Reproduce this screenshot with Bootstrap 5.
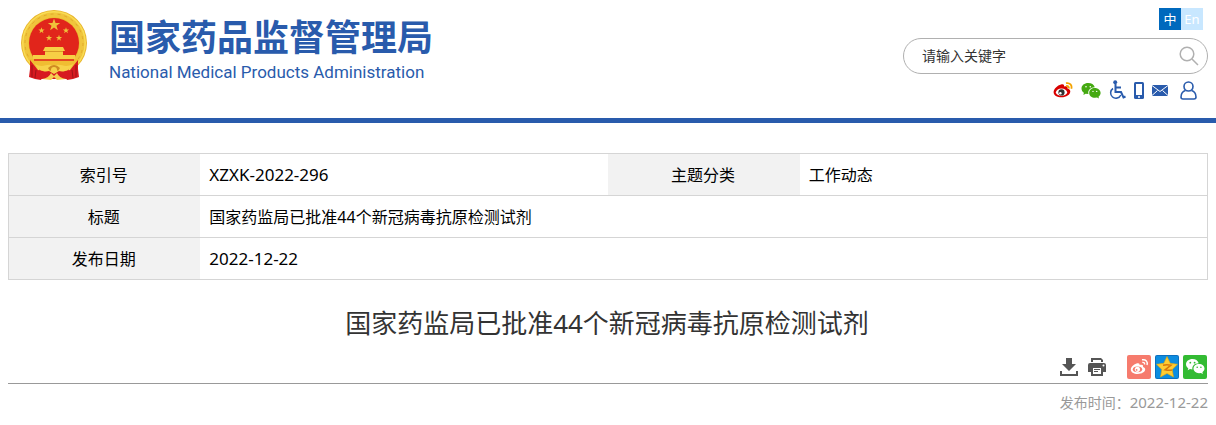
<!DOCTYPE html>
<html lang="zh-CN">
<head>
<meta charset="utf-8">
<meta name="viewport" content="width=device-width, initial-scale=1">
<title>国家药监局已批准44个新冠病毒抗原检测试剂</title>
<link href="https://cdn.jsdelivr.net/npm/bootstrap@5.3.0/dist/css/bootstrap.min.css" rel="stylesheet">
<style>
body{font-family:"Noto Sans","Noto Sans CJK SC",sans-serif;font-size:16px;line-height:24px;color:#000;background:#fff}
a{text-decoration:none}
svg{display:block;flex:none}
.site-head{border-bottom:5px solid #295bac}
.brand{padding:10px 0 0 13px;gap:22px;color:#295bac}
.brand-cn{font-family:"Noto Sans CJK SC",sans-serif;font-weight:700;font-size:36px;line-height:40px;padding-top:5px}
.brand-en{font-family:Roboto,sans-serif;font-size:17px;line-height:24px;padding-top:5px}
.head-side{width:305px;padding:8px 0 18px}
.lang{padding-right:5px}
.lang a{width:22px;height:22px;line-height:22px;font-size:13px;text-align:center;color:#fff}
.lang .on{background:#0069bd}
.lang .off{background:#c8e7ff}
.search{height:36px;margin-top:8px;border:1px solid #b0b0b0;border-radius:18px;padding:0 8px 0 18px}
.search input{border:0;outline:0;background:none;font-size:14px;color:#333;padding:0;min-width:0}
.search input::placeholder{color:#333;opacity:1}
.search button{border:0;background:none;padding:0}
.quick{height:20px;margin-top:6px;padding-right:11px;gap:8px}
.quick a:last-child{margin-left:4px}
.info{border:1px solid #d5d5d5;margin-top:30px;table-layout:fixed;border-collapse:collapse}
.info tr{height:42px;border-bottom:1px solid #d5d5d5}
.info th{width:16%;background:#f2f2f2;font-weight:400;text-align:center;padding:0 2px 0 0}
.info td{padding:0 9px}
.info .code{font-size:17px}
.headline{font-size:26px;line-height:38px;font-weight:400;color:#333;margin:24px 2px 12px 0}
.tools{border-bottom:1px solid #999;height:30px;padding:0 1px 4px 0}
.tools button{border:0;background:none;padding:0}
.issued{font-size:14px;line-height:20px;color:#999;margin:8px 0 0}
.issued time{font-size:15px}
</style>
</head>
<body>
<svg width="0" height="0" class="position-absolute" aria-hidden="true">
<defs>
<path id="star" d="M0-10 2.4-3.2 9.5-3.1 3.8 1.2 5.9 8.1 0 4-5.9 8.1-3.8 1.2-9.5-3.1-2.4-3.2z"/>
</defs>
</svg>
<header class="site-head px-2 d-flex justify-content-between">
<a href="#" class="brand d-flex">
<svg width="66" height="71" viewBox="0 0 66 71" aria-label="国徽">
<ellipse cx="33" cy="33" rx="33" ry="33" fill="#e9b52c"/>
<circle cx="33" cy="33" r="31" fill="none" stroke="#f9dc55" stroke-width="2"/>
<circle cx="33" cy="33" r="28" fill="none" stroke="#f0c53c" stroke-width="5"/>
<circle cx="33" cy="33" r="29" fill="none" stroke="#e2aa2a" stroke-width="1" stroke-dasharray="3 4"/>
<circle cx="33" cy="33" r="25" fill="#e1251b"/>
<g fill="#efc13a"><use href="#star" transform="translate(33 15) scale(.65)"/><use href="#star" transform="translate(20.500 20.500) scale(.33)"/><use href="#star" transform="translate(45 20.500) scale(.33)"/><use href="#star" transform="translate(28 28) scale(.33)"/><use href="#star" transform="translate(38 28) scale(.33)"/></g>
<path d="M24 37h18l2 4h-2v4h12v4H12v-4h12v-4h-2z" fill="#f7cf45"/>
<path d="M24 41.500h18" stroke="#d79a28"/>
<path d="M9 49h48v7H9z" fill="#f0bd32"/>
<path d="M13 50h40" stroke="#e1251b" stroke-width="1.500"/>
<path d="M9 50 17 60 24 62 20 70 14 69 8 67 9 59zM57 50 49 60 42 62 46 70 52 69 58 67 57 59z" fill="#d71920"/>
<path d="M11 55v12M15 60l-1 8M55 55v12M51 60l1 8" stroke="#9d1218"/>
<path d="M18 59h30l-2 10H20z" fill="#d71920"/>
<path d="M14 54c9 5 12-2 19 2 7-4 10 3 19-2-3 8-11 8-14 7l-5 3-5-3c-3 1-11 1-14-7z" fill="#f7d24a"/>
<path d="M27 58q6-6 12 0l-2 3q-4-4-8 0z" fill="#cf8b22"/><circle cx="33" cy="60" r="3" fill="#f7d24a"/>
<path d="M21 69q7-1 9-6l3 3 3-3q2 5 9 6l-9 1-3-3-3 3z" fill="#f5cf52"/>
</svg>
<span class="d-block"><span class="brand-cn d-block">国家药品监督管理局</span><span class="brand-en d-block">National Medical Products Administration</span></span>
</a>
<div class="head-side">
<div class="lang d-flex justify-content-end"><a href="#" class="on">中</a><a href="#" class="off">En</a></div>
<form class="search d-flex align-items-center">
<input type="text" class="flex-grow-1" placeholder="请输入关键字" aria-label="请输入关键字">
<button type="button" aria-label="搜索"><svg width="20" height="20" viewBox="0 0 20 20" fill="none" stroke="#b0b0b0" stroke-width="1.500"><circle cx="8" cy="8" r="6.800"/><path d="m13 13 6 6"/></svg></button>
</form>
<div class="quick d-flex justify-content-end align-items-center">
<a href="#" aria-label="微博"><svg width="20" height="16" viewBox="0 0 20 16"><path d="M8 2.500c2-.8 3.500-.2 3 2 2.500-.7 4 0 3.500 2 2 .6 2.800 1.600 2.800 3 0 3-4 5.800-8.800 5.800C4 15.300.6 13.300.6 10.200.6 7 4.500 3.300 8 2.500z" fill="#d80000"/><ellipse cx="8.500" cy="10.200" rx="5.600" ry="3.600" fill="#fff"/><circle cx="8.500" cy="10.400" r="3.100" fill="#333"/><circle cx="7.400" cy="11.200" r="1.200" fill="#fff"/><path d="M13 1.200c4-.8 6.300 2 5.300 5.600M13.200 4c2-.3 3 .8 2.500 2.600" fill="none" stroke="#f4a300" stroke-width="1.800"/></svg></a>
<a href="#" aria-label="微信"><svg width="20" height="17" viewBox="0 0 20 17" fill="#45a911"><path d="M7.200 1C3.300 1 .5 3.400.5 6.500c0 1.800 1 3.300 2.400 4.300L2.400 13l2.300-1.300 2.700.3c-.8-4 2-6.600 6.400-6.800C13.100 2.500 10.400 1 7.200 1z"/><path d="M13.800 6c-3.300 0-5.600 2.100-5.600 4.900s2.500 4.800 5.700 4.800l2.100-.3 2 1.100-.5-1.800c1.300-.9 2.100-2.200 2.100-3.700C19.600 8.200 17 6 13.800 6z"/><g fill="#fff"><circle cx="5" cy="4.800" r=".8"/><circle cx="9.300" cy="4.800" r=".8"/><circle cx="12" cy="9.400" r=".7"/><circle cx="15.700" cy="9.400" r=".7"/></g></svg></a>
<a href="#" aria-label="无障碍"><svg width="17" height="20" viewBox="0 0 17 20" fill="none" stroke="#295bac" stroke-width="2"><circle cx="6.200" cy="2.200" r="2" fill="#295bac" stroke="none"/><path d="M6.500 4v8h5.500l2.500 5.500 2-1M7 7.500h5"/><path d="M4 8.500a5.300 5.300 0 1 0 7.800 6.500" stroke-width="1.500"/></svg></a>
<a href="#" aria-label="手机"><svg width="10" height="17" viewBox="0 0 10 17"><rect width="10" height="17" rx="1.500" fill="#295bac"/><path d="M2 2h6v11H2z" fill="#fff"/><circle cx="5" cy="15" r="1" fill="#fff"/></svg></a>
<a href="#" aria-label="邮箱"><svg width="16" height="11" viewBox="0 0 16 11"><path d="M0 0h16v11H0z" fill="#295bac"/><path d="m0 .5 8 6 8-6M0 10.500l5.500-5M16 10.500l-5.500-5" fill="none" stroke="#fff"/></svg></a>
<a href="#" aria-label="用户"><svg width="17" height="19" viewBox="0 0 17 19" fill="none" stroke="#295bac" stroke-width="1.600"><circle cx="8.500" cy="5.500" r="4.500"/><path d="M5.500 9.500C2.500 10.500 1 13 1 16q0 2 2 2h11q2 0 2-2c0-3-1.500-5.500-4.500-6.500"/></svg></a>
</div>
</div>
</header>
<main class="px-2">
<table class="info w-100">
<tbody>
<tr><th scope="row">索引号</th><td class="code">XZXK-2022-296</td><th scope="row">主题分类</th><td>工作动态</td></tr>
<tr><th scope="row">标题</th><td colspan="3">国家药监局已批准44个新冠病毒抗原检测试剂</td></tr>
<tr><th scope="row">发布日期</th><td colspan="3" class="code">2022-12-22</td></tr>
</tbody>
</table>
<h1 class="headline text-center">国家药监局已批准44个新冠病毒抗原检测试剂</h1>
<div class="tools d-flex justify-content-end align-items-center gap-1">
<button type="button" class="me-1" aria-label="下载"><svg width="20" height="20" viewBox="0 0 20 20" fill="#555"><path d="M7 1h6v6h4l-7 7-7-7h4zM1 14h2v3h14v-3h2v5H1z"/></svg></button>
<button type="button" class="me-3" aria-label="打印"><svg width="20" height="20" viewBox="0 0 20 20" fill="#555"><path d="M4 1h10l2 2v2H4zM6 3v2h8V3z" fill-rule="evenodd"/><path d="M3 6h14q2 0 2 2v7h-3v4H4v-4H1V8q0-2 2-2zM6 11v6h8v-6z" fill-rule="evenodd"/><path d="M7 12h6v1H7zM7 14h4v1H7z"/><circle cx="16.500" cy="8.500" r="1" fill="#fff"/></svg></button>
<a href="#" aria-label="分享到微博"><svg width="24" height="24" viewBox="0 0 24 24"><rect width="24" height="24" rx="2" fill="#f67b6d"/><path d="M9.500 8.500c2-.8 3.600-.2 3 1.600 2.500-.8 4.200 0 3.500 1.800 1.600.5 2.200 1.300 2.200 2.400 0 2.700-3.500 4.700-7.500 4.700s-6.900-1.900-6.900-4.600c0-2.300 2.700-5 5.700-5.900z" fill="#fff"/><ellipse cx="10.500" cy="14.300" rx="4.700" ry="2.900" fill="#f67b6d"/><circle cx="10.400" cy="14.300" r="2.600" fill="#fff"/><circle cx="9.600" cy="14.900" r=".9" fill="#f67b6d"/><path d="M15 4.800c4-.7 6 2 5 5.200M15.300 7.400c1.700-.2 2.500.7 2.200 2.100" fill="none" stroke="#fff" stroke-width="1.400"/></svg></a>
<a href="#" aria-label="分享到QQ空间"><svg width="24" height="24" viewBox="0 0 24 24"><rect width="24" height="24" rx="2" fill="#0b70bf"/><rect x="1" y="1" width="22" height="22" rx="1" fill="#0d8de0"/><path d="m12 1.500 3.200 6.800 7.300 1-5.300 5.200 1.300 7.500L12 18.400 5.500 22l1.300-7.500L1.500 9.300l7.300-1z" fill="#fc3" stroke="#e9a800" stroke-width=".6"/><path d="M8 10.200q4-.8 8 0l-6 4.600q4 1 7 .2" fill="none" stroke="#d9780b" stroke-width="1.500"/></svg></a>
<a href="#" aria-label="分享到微信"><svg width="24" height="24" viewBox="0 0 24 24"><rect width="24" height="24" rx="2" fill="#3b3"/><path d="M9.500 4C5.800 4 3 6.300 3 9.200c0 1.700.9 3.100 2.300 4.100l-.6 2 2.300-1.200 2.400.3c-.6-3.700 2.200-6 6.300-6.200C15 5.600 12.500 4 9.500 4z" fill="#fff"/><path d="M16 9c-3.200 0-5.500 2-5.500 4.600s2.400 4.600 5.500 4.600l1.900-.3 2 1.200-.5-1.900c1.300-.9 2.100-2.100 2.100-3.600C21.500 11 19.200 9 16 9z" fill="#fff"/><g fill="#3b3"><circle cx="7.300" cy="7.700" r=".9"/><circle cx="11.600" cy="7.700" r=".9"/><circle cx="14.200" cy="12.300" r=".8"/><circle cx="17.900" cy="12.300" r=".8"/></g></svg></a>
</div>
<p class="issued text-end">发布时间：<time datetime="2022-12-22">2022-12-22</time></p>
</main>
<script src="https://cdn.jsdelivr.net/npm/bootstrap@5.3.0/dist/js/bootstrap.bundle.min.js"></script>
</body>
</html>
